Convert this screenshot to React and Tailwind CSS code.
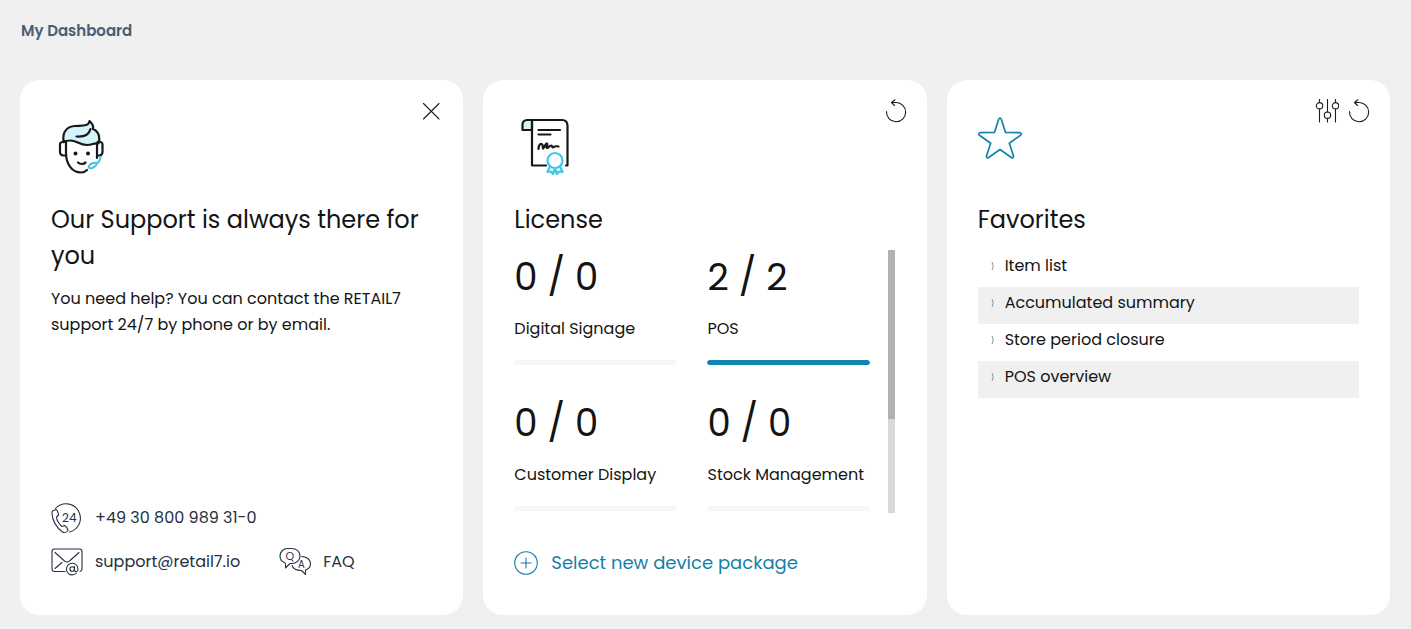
import clsx from "clsx";

const licenses = [
  { name: "Digital Signage", used: 0, total: 0 },
  { name: "POS", used: 2, total: 2 },
  { name: "Customer Display", used: 0, total: 0 },
  { name: "Stock Management", used: 0, total: 0 },
];

const favorites = ["Item list", "Accumulated summary", "Store period closure", "POS overview"];

function SupportIcon() {
  return (
    <svg className="w-[60px] h-[60px]" viewBox="0 0 60 60" fill="none" strokeLinecap="round" strokeLinejoin="round" aria-hidden="true">
      <g stroke="#17181a" strokeWidth="2.2">
        <path d="M12.500 27C11 15.500 17 11.500 24 11C31 10.500 38 11.500 38.500 6C41.500 8.500 42.500 11.500 42 14C49 17 49 24 47.500 28.500C42.500 27.500 42 30 36 30C28.500 30 25.500 25.500 19.500 25.500C16 25.500 14 26 12.500 27Z" fill="#d5f3fb" />
        <path d="M25.500 21.500C32 22 38 20 39.500 14" />
        <path d="M15 26.500V38C15 49 21 57.500 30 57.500C32.500 57.500 34.500 56.500 36 55" />
        <path d="M15 27H12C10 27 9 28 9 29.500V36.500C9 39 10.500 40.500 12.500 40.500H15" />
        <path d="M46 28.500V43M46.500 27H49C50.500 27 51.500 28 51.500 29.500V36.500C51.500 39 50 40.500 48 40.500H46.500" />
        <path d="M27 47.500C29 49.500 33 49.500 34.500 47.500" />
      </g>
      <circle cx="24.500" cy="38.500" r="2" fill="#17181a" />
      <circle cx="37" cy="38.500" r="2" fill="#17181a" />
      <g stroke="#3fc6e8" strokeWidth="2">
        <path d="M49.500 42C49 45.500 48 47.500 45.500 48.500" />
        <path d="M38 51C39 48.500 44 47 45.500 48.500C46 51 40.500 54 38.500 53C37.500 52.500 37.500 52 38 51Z" />
      </g>
    </svg>
  );
}

function LicenseIcon() {
  return (
    <svg className="w-[60px] h-[60px]" viewBox="0 0 60 60" fill="none" strokeLinecap="round" strokeLinejoin="round" aria-hidden="true">
      <g stroke="#17181a" strokeWidth="2.2">
        <path d="M18 15H8.500V9.500C8.500 7 10.500 5 13 5H18Z" fill="#d5f3fb" />
        <path d="M13 5H48C51.500 5 53.500 7 53.500 11V50.500H52M18 5V50.500H32" />
        <path d="M24.500 15H46M24.500 19.500H36.500" />
        <path d="M24.500 34C24.500 31 26 28.500 27.500 29C29.500 29.500 28.500 33 29 33.500C31 32 31.500 28 33 28.500C34.500 29.500 31.500 32.500 33 33C35 33 35 30.500 37 30.500C39 30.500 37.500 33.500 39.500 32C41 31 42 31 44.500 31.500" />
      </g>
      <g stroke="#3fc6e8" strokeWidth="2.2">
        <circle cx="41" cy="45.500" r="7.500" />
        <path d="M36 51.500L33.500 57L37 56.500L39 59L41 54L43 59L45 56.500L48.500 57L46 51.500" />
      </g>
    </svg>
  );
}

function StarIcon() {
  return (
    <svg className="w-[60px] h-[60px]" viewBox="0 0 60 60" fill="none" stroke="#1583a9" strokeWidth="1.700" strokeLinejoin="round" aria-hidden="true">
      <path d="M20.600 4.500Q22 1.500 23.400 4.500L27.500 17.500L42 17.700Q44.500 18.500 42.500 20.200L31.300 28.300L35.500 41Q35.500 43.800 33 42.300L22 34.500L11 42.300Q8.500 43.800 8.500 41L12.700 28.300L1.500 20.200Q-.500 18.500 2 17.700L16.500 17.500Z" />
    </svg>
  );
}

function LineIcon({ size = "w-6 h-6", box = "0 0 24 24", children }) {
  return (
    <svg className={clsx("shrink-0", size)} viewBox={box} fill="none" stroke="currentColor" strokeWidth="1.100" strokeLinecap="round" strokeLinejoin="round" aria-hidden="true">
      {children}
    </svg>
  );
}

function CloseIcon() {
  return (
    <LineIcon box="1 0 24 24">
      <path d="M4.500 4.500L20 20M20 4.500L4.500 20" />
    </LineIcon>
  );
}

function ReloadIcon() {
  return (
    <LineIcon>
      <path d="M2.500 12.500A9.600 9.600 0 1 0 12 3.500H7.500M11 .800L7.500 3.500L10.500 6.500" />
    </LineIcon>
  );
}

function SettingsIcon() {
  return (
    <LineIcon>
      <path d="M4.500 .500V3.500M4.500 10V23M12.500 .500V13M12.500 19.500V23M20.500 .500V3.500M20.500 10V23" />
      <circle cx="4.500" cy="6.800" r="3.200" />
      <circle cx="12.500" cy="16.200" r="3.200" />
      <circle cx="20.500" cy="6.800" r="3.200" />
    </LineIcon>
  );
}

function PhoneIcon() {
  return (
    <LineIcon size="w-8 h-8" box="0 0 32 32">
      <path d="M4.500 6.500A14.300 14.300 0 1 1 18.500 30" />
      <path d="M1.500 9L5 7.500C6 7.500 7.500 11 7.500 13L5.500 15C5.500 18 8.500 23 11 24.500L13.500 23.500C15 24 17 27 17 28.500C15.500 30.500 13 31 11.500 30C6 26.500 1 18 1 11.500Q1 10 1.500 9Z" />
      <text x="11" y="20" fontSize="12" fill="currentColor" stroke="none">24</text>
    </LineIcon>
  );
}

function MailIcon() {
  return (
    <LineIcon size="w-8 h-8" box="0 0 32 32">
      <path d="M14 25.500H3.500Q1 25.500 1 23V5.500Q1 3 3.500 3H28.500Q31 3 31 5.500V23Q31 25 29 25.500" />
      <path d="M4 6.500L13.500 15Q16 17 18.500 15L28 6.500M4 22.500L11 16.500" />
      <path d="M25.500 27A5.800 5.800 0 1 1 27 23C27 26 24 26.500 23.500 24V20.500" />
      <circle cx="21.200" cy="23" r="2.300" />
    </LineIcon>
  );
}

function FaqIcon() {
  return (
    <LineIcon size="w-8 h-8" box="0 0 32 32">
      <path d="M6.500 18V22L11 17.500H12.500C17.500 17.500 21 14.500 21 10C21 5.500 17.500 2.500 12.500 2.500H9C4 2.500 1 6 1 10C1 13.500 3 15.500 5 16.300Q6.500 17 6.500 18Z" />
      <path d="M22.500 10.500C27.500 10.500 31.500 13.500 31.500 17.500C31.500 20.500 29.500 23 26.500 24V28.500L22.500 24.500C17.500 24.500 14 22.500 13 19.500" />
      <text x="6.500" y="14" fontSize="11" fill="currentColor" stroke="none">Q</text>
      <text x="19" y="21.500" fontSize="10" fill="currentColor" stroke="none">A</text>
    </LineIcon>
  );
}

function Card({ icon, title, actions, children }) {
  return (
    <section className="flex flex-col rounded-[20px] bg-white">
      <div className="flex items-start justify-between pl-[31px] pr-[19px] pt-[19px]">
        <div className="pt-4">{icon}</div>
        <div className="flex gap-2 text-[#1b1c20]">{actions}</div>
      </div>
      <div className="flex flex-1 flex-col px-[31px] pt-[27px]">
        <h2 className="text-2xl leading-9 text-[#141414]">{title}</h2>
        {children}
      </div>
    </section>
  );
}

function LicenseItem({ name, used, total }) {
  const percent = total ? (used / total) * 100 : 0;

  return (
    <div className="mb-[30px]">
      <div className="text-[37px] leading-[54px]">{used} / {total}</div>
      <div className="mt-3 mb-[18px] whitespace-nowrap leading-[26px]">{name}</div>
      <div className="h-[5px] overflow-hidden rounded-full bg-[#f6f6f7]">
        <div className="h-full rounded-full bg-[#0d87ad]" style={{ width: `${percent}%` }} />
      </div>
    </div>
  );
}

export default function App() {
  return (
    <main className="flex min-h-screen flex-col bg-[#f0f0f0] pl-5 pr-[21px] pb-[14px] pt-[19px] font-['Poppins','Inter',sans-serif] text-base text-[#141414]">
      <h1 className="mb-[37px] pl-px text-[15px] leading-6 font-semibold text-[#495d77]">My Dashboard</h1>
      <div className="grid flex-1 grid-cols-3 gap-5">
        <Card
          icon={<SupportIcon />}
          title="Our Support is always there for you"
          actions={<button type="button" aria-label="Close"><CloseIcon /></button>}
        >
          <p className="mt-3 leading-[26px]">
            You need help? You can contact the RETAIL7 support 24/7 by phone or by email.
          </p>
          <div className="mt-auto flex flex-col gap-3 pb-[37px] text-[#263141]">
            <a href="tel:+493080098931" className="flex items-center gap-3">
              <PhoneIcon /> +49 30 800 989 31-0
            </a>
            <div className="flex gap-[39px]">
              <a href="mailto:support@retail7.io" className="flex items-center gap-3">
                <MailIcon /> support@retail7.io
              </a>
              <a href="#faq" className="flex items-center gap-3">
                <FaqIcon /> FAQ
              </a>
            </div>
          </div>
        </Card>

        <Card
          icon={<LicenseIcon />}
          title="License"
          actions={<button type="button" aria-label="Reload"><ReloadIcon /></button>}
        >
          <div className="mt-3 mr-px flex h-[263px] gap-[18px]">
            <div className="grid flex-1 grid-cols-2 content-start gap-x-[31px] gap-y-px overflow-hidden">
              {licenses.map((item) => (
                <LicenseItem key={item.name} {...item} />
              ))}
            </div>
            <div className="w-[7px] bg-[#d9d9d9]">
              <div className="h-[169px] bg-[#b2b2b2]" />
            </div>
          </div>
          <a href="#packages" className="mt-auto flex items-center gap-[13px] pb-[38px] text-lg leading-7 text-[#1580a5]">
            <LineIcon>
              <circle cx="12" cy="12" r="11.300" />
              <path d="M12 7V17M7 12H17" />
            </LineIcon>
            Select new device package
          </a>
        </Card>

        <Card
          icon={<StarIcon />}
          title="Favorites"
          actions={
            <>
              <button type="button" aria-label="Settings"><SettingsIcon /></button>
              <button type="button" aria-label="Reload"><ReloadIcon /></button>
            </>
          }
        >
          <ul className="mt-3">
            {favorites.map((name) => (
              <li key={name} className="h-[37px] even:bg-[#f0f0f0]">
                <a href="#favorites" className="flex items-center gap-[9px] pl-3 leading-8">
                  <svg className="w-[6px] h-2" viewBox="0 0 6 8" fill="none" stroke="#777" strokeWidth="0.800" aria-hidden="true">
                    <path d="M2 0Q4.500 4 2 8" />
                  </svg>
                  {name}
                </a>
              </li>
            ))}
          </ul>
        </Card>
      </div>
    </main>
  );
}
